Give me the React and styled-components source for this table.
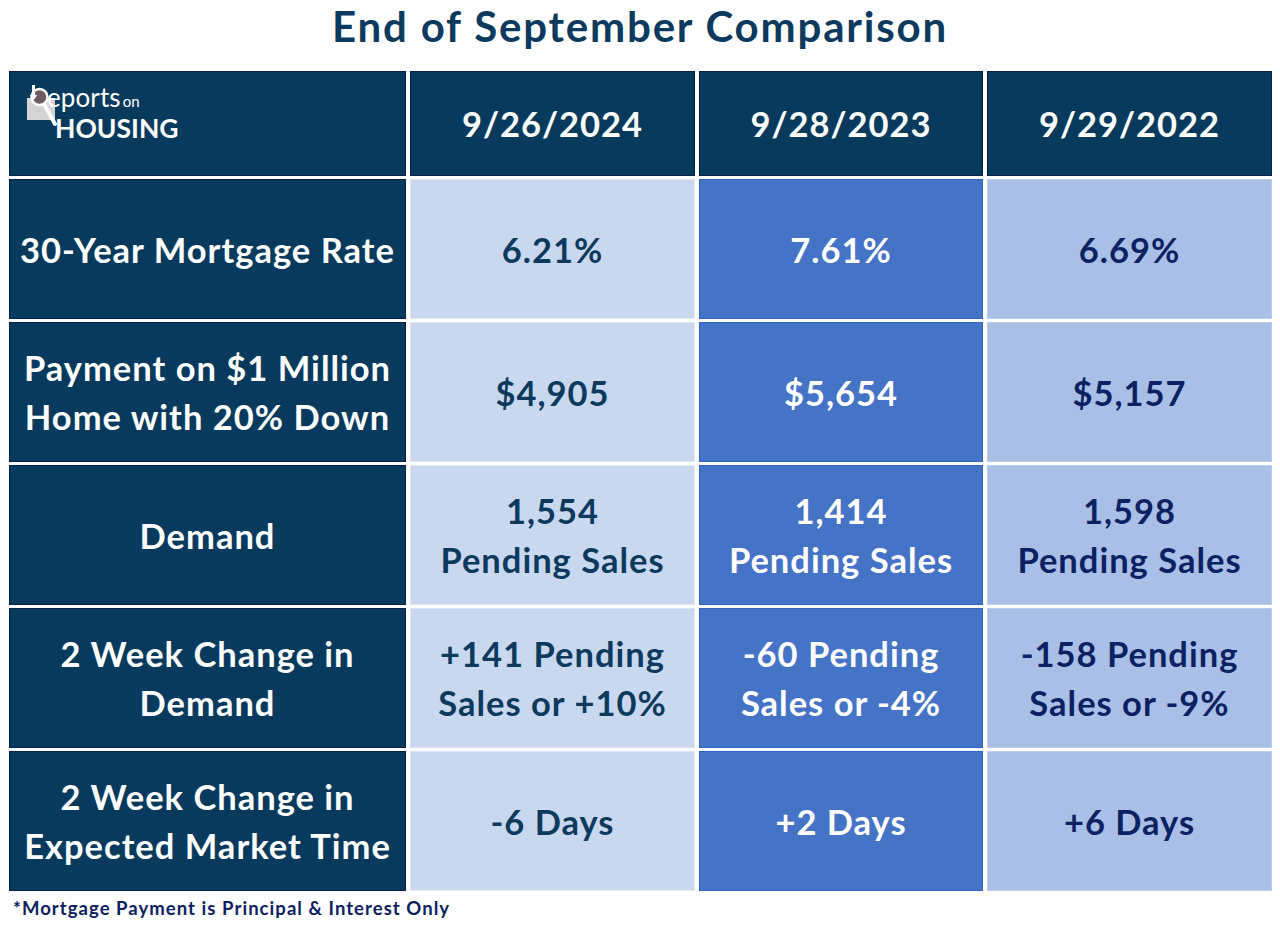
import React from "react";
import styled, { createGlobalStyle } from "styled-components";

const Global = createGlobalStyle`
  html, body { margin: 0; padding: 0; background: #ffffff; }
  body { font-family: "Lato", "Open Sans", sans-serif; }
`;

const Page = styled.div`
  width: 1280px;
  height: 926px;
  box-sizing: border-box;
  padding: 0 0 0 9px;
  background: #fff;
  display: flex;
  flex-direction: column;
`;

const Title = styled.h1`
  margin: 0;
  height: 71px;
  display: flex;
  align-items: center;
  justify-content: center;
  padding-right: 9px;
  padding-bottom: 20px;
  box-sizing: border-box;
  font-family: "Lato", sans-serif;
  font-weight: 700;
  font-size: 42px;
  color: #0b3a5e;
  letter-spacing: 1.8px;
`;

const Grid = styled.div`
  display: grid;
  grid-template-columns: 397px 285px 284px 285px;
  grid-template-rows: 105px repeat(5, 140px);
  column-gap: 4px;
  row-gap: 3px;
`;

const palette = {
  head: { bg: "#083a5e", border: "#06204a", color: "#ffffff" },
  c1: { bg: "#cad8ef", border: "#dfe7f5", color: "#0b3a5e" },
  c2: { bg: "#4573c5", border: "#2f64c0", color: "#ffffff" },
  c3: { bg: "#a9bfe5", border: "#bdcdec", color: "#0c2163" },
};

const Cell = styled.div`
  box-sizing: border-box;
  background: ${(p) => palette[p.$tone].bg};
  border: 1px solid ${(p) => palette[p.$tone].border};
  color: ${(p) => palette[p.$tone].color};
  display: flex;
  align-items: center;
  justify-content: center;
  text-align: center;
  font-family: "Lato", sans-serif;
  font-weight: 700;
  font-size: 34.5px;
  letter-spacing: 1px;
  line-height: 49px;
  white-space: pre-line;
`;

const LogoCell = styled(Cell)`
  align-items: flex-start;
  justify-content: flex-start;
  padding: 12px 0 0 17px;
  letter-spacing: 0;
`;

const Logo = styled.div`
  display: flex;
  align-items: flex-start;
  color: #fff;
  font-family: "Lato", sans-serif;
  text-align: left;
`;

const LogoIcon = styled.svg`
  width: 40px;
  height: 48px;
  margin-top: -4px;
  flex: none;
`;

const LogoText = styled.div`
  display: flex;
  flex-direction: column;
  margin-left: -20px;
`;

const LogoTop = styled.div`
  font-size: 26px;
  line-height: 26px;
  font-weight: 400;
  letter-spacing: 0.1px;
  white-space: nowrap;
`;

const LogoOn = styled.span`
  font-size: 15px;
  margin-left: 2px;
  letter-spacing: 0;
`;

const LogoBottom = styled.div`
  font-size: 26.5px;
  line-height: 26px;
  font-weight: 700;
  letter-spacing: 0;
  margin-top: 1px;
  margin-left: 8px;
`;

const Footnote = styled.div`
  margin-top: 6px;
  padding-left: 4px;
  font-family: "Lato", sans-serif;
  font-weight: 700;
  font-size: 18.5px;
  letter-spacing: 1.05px;
  color: #0c2163;
`;

const rows = [
  { label: "30-Year Mortgage Rate", vals: ["6.21%", "7.61%", "6.69%"] },
  {
    label: "Payment on $1 Million\nHome with 20% Down",
    vals: ["$4,905", "$5,654", "$5,157"],
  },
  {
    label: "Demand",
    vals: [
      "1,554\nPending Sales",
      "1,414\nPending Sales",
      "1,598\nPending Sales",
    ],
  },
  {
    label: "2 Week Change in\nDemand",
    vals: [
      "+141 Pending\nSales or +10%",
      "-60 Pending\nSales or -4%",
      "-158 Pending\nSales or -9%",
    ],
  },
  {
    label: "2 Week Change in\nExpected Market Time",
    vals: ["-6 Days", "+2 Days", "+6 Days"],
  },
];

const tones = ["c1", "c2", "c3"];

export default function App() {
  return (
    <>
      <Global />
      <Page>
        <Title>End of September Comparison</Title>
        <Grid>
          <LogoCell $tone="head">
            <Logo>
              <LogoIcon viewBox="0 0 40 48">
                <rect x="0" y="18" width="28" height="22" fill="#d4d4d4" />
                <line x1="17" y1="24" x2="28" y2="44" stroke="#ffffff" strokeWidth="4" strokeLinecap="round" />
                <circle cx="12.5" cy="17" r="8" fill="#6e5b60" stroke="#ffffff" strokeWidth="2.5" />
                <rect x="5" y="5" width="3" height="14" fill="#ffffff" />
                <path d="M3.5 15 L6.5 19 L9.5 15" fill="none" stroke="#ffffff" strokeWidth="1.5" />
              </LogoIcon>
              <LogoText>
                <LogoTop>
                  eports<LogoOn>on</LogoOn>
                </LogoTop>
                <LogoBottom>HOUSING</LogoBottom>
              </LogoText>
            </Logo>
          </LogoCell>
          <Cell $tone="head">9/26/2024</Cell>
          <Cell $tone="head">9/28/2023</Cell>
          <Cell $tone="head">9/29/2022</Cell>
          {rows.map((r) => (
            <React.Fragment key={r.label}>
              <Cell $tone="head">{r.label}</Cell>
              {r.vals.map((v, i) => (
                <Cell key={i} $tone={tones[i]}>
                  {v}
                </Cell>
              ))}
            </React.Fragment>
          ))}
        </Grid>
        <Footnote>*Mortgage Payment is Principal &amp; Interest Only</Footnote>
      </Page>
    </>
  );
}
